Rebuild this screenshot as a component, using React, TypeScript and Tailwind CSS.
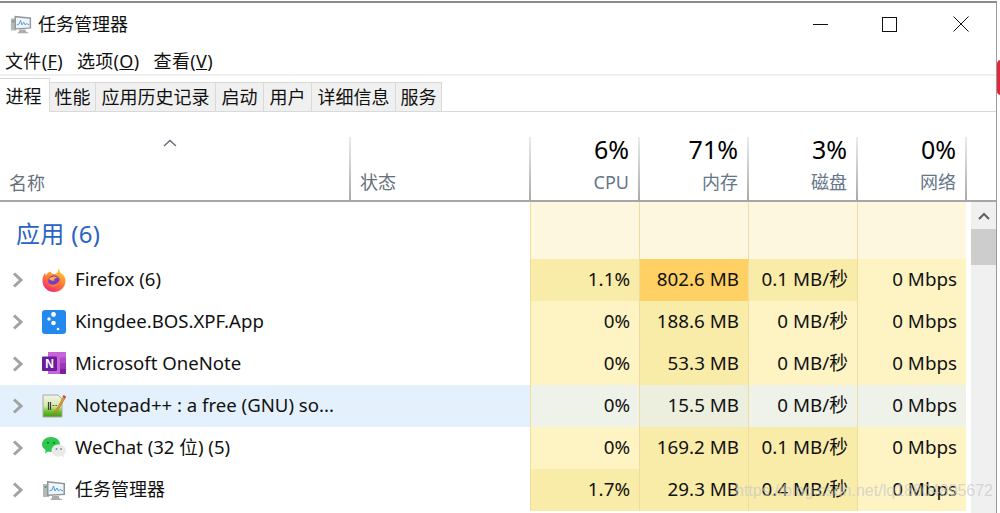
const FONT = "font-['Noto_Sans','Noto_Sans_CJK_SC',sans-serif]";

const TaskIcon = ({ className }: { className: string }) => (
    <svg viewBox="0 0 24 24" className={className}>
        <rect x="1" y="6" width="6" height="13" fill="#b5b8b8" />
        <rect x="2.5" y="8" width="2" height="2" fill="#5aa85a" />
        <path d="M5 3 L23 5 L23 17 L5 18 Z" fill="#8f9599" />
        <path d="M6.5 4.8 L21.5 6.3 L21.5 15.8 L6.5 16.5 Z" fill="#eef5fa" />
        <path d="M7.5 13 L10 12 L11.5 8 L13 13 L15 10 L16.5 13 L18 11.5 L21 13" fill="none" stroke="#4f9bd0" strokeWidth="1" />
        <path d="M10 18 L17 18 L17 20 L21 22 L8 22 L10 20 Z" fill="#a9adb0" />
    </svg>
);

const FirefoxIcon = () => (
    <svg viewBox="0 0 24 24" className="w-6 h-6">
        <defs>
            <linearGradient id="ffBody" x1="0.8" y1="0" x2="0.3" y2="1">
                <stop offset="0" stopColor="#ffd23c" />
                <stop offset="0.45" stopColor="#ff8a2a" />
                <stop offset="1" stopColor="#f5247a" />
            </linearGradient>
        </defs>
        <path d="M16 0.5 C18 3 17.5 4 19 5 C22 7 23.5 10 23.5 13 A11.5 11 0 0 1 0.5 13 C0.5 10 1 7 3 5 L4 7.5 C5 5 7 4 9 3.5 C8.5 5 10 6 12 6 C15 6 16.5 4 16 0.5 Z" fill="url(#ffBody)" />
        <circle cx="12" cy="13" r="5.8" fill="#7a3bc8" />
        <path d="M7 11 C9 8 13 7.5 16 10 C13 9.5 11.5 11 12.5 12.5 C10 13 8.5 12.5 7 11 Z" fill="#ffb03a" />
        <path d="M18 9 C19.5 13 17.5 18.5 12 19 C9 19.2 6.5 17.5 5.5 15 C8 17 12.5 17.5 15.5 15 C17.5 13.2 18.2 11 18 9 Z" fill="#ff7a2a" />
    </svg>
);

const KingdeeIcon = () => (
    <svg viewBox="0 0 24 24" className="w-6 h-6">
        <rect width="24" height="24" rx="3" fill="#2389ee" />
        <circle cx="11.5" cy="4.5" r="2.4" fill="#fff" />
        <circle cx="7" cy="9" r="1.7" fill="#fff" />
        <circle cx="11.5" cy="13" r="2.3" fill="#fff" />
        <circle cx="16" cy="19" r="1.3" fill="#fff" />
    </svg>
);

const OneNoteIcon = () => (
    <svg viewBox="0 0 24 24" className="w-6 h-6">
        <rect x="6" y="0" width="18" height="22" fill="#c765d8" />
        <rect x="18" y="5.5" width="6" height="5.5" fill="#b14cc8" />
        <rect x="18" y="11" width="6" height="5.5" fill="#9c35b8" />
        <rect x="18" y="16.5" width="6" height="5.5" fill="#7d1fa0" />
        <rect x="0" y="4.5" width="15" height="14.5" rx="1" fill="#6a1d9a" />
        <text x="7.5" y="16" textAnchor="middle" fill="#fff" fontSize="12" fontWeight="700" fontFamily="Liberation Sans">N</text>
    </svg>
);

const NotepadIcon = () => (
    <svg viewBox="0 0 24 24" className="w-6 h-6">
        <defs>
            <linearGradient id="npPage" x1="0" y1="0" x2="0" y2="1">
                <stop offset="0" stopColor="#f4f4ec" />
                <stop offset="0.5" stopColor="#d6e8a8" />
                <stop offset="0.75" stopColor="#6cc22c" />
                <stop offset="1" stopColor="#3f9a1e" />
            </linearGradient>
        </defs>
        <path d="M1 1 L16 1 L20 5 L20 23 L1 23 Z" fill="url(#npPage)" stroke="#a8aca4" strokeWidth="1" />
        <path d="M6.5 8 L6.5 16 M8.5 8 L8.5 16" stroke="#3b3b3b" strokeWidth="1.2" />
        <path d="M10.5 11.5 L15 11.5" stroke="#555" strokeWidth="1" strokeDasharray="2 1" />
        <path d="M22 2 L13.5 17 L11.5 20.5 L14.5 18.5 L23.5 3.5 Z" fill="#e8a020" stroke="#9a5a18" strokeWidth="0.5" />
        <path d="M21.5 1 L24 2.5 L23 4.5 L20.5 3 Z" fill="#d8443a" />
    </svg>
);

const WeChatIcon = () => (
    <svg viewBox="0 0 24 24" className="w-6 h-6">
        <path d="M9 1 C14 1 18 4 18 8.5 C18 13 14 16 9 16 C8 16 7 16 6 15.6 L3 17.5 L3.6 14 C1.3 12.6 0 10.6 0 8.5 C0 4 4 1 9 1 Z" fill="#2dc84d" />
        <circle cx="6" cy="6.8" r="1.1" fill="#137a2a" />
        <circle cx="12" cy="6.8" r="1.1" fill="#137a2a" />
        <path d="M16.5 8.5 C20.6 8.5 24 11.2 24 14.5 C24 16.2 23 17.7 21.7 18.7 L22.2 21.5 L19.6 20 C18.6 20.3 17.6 20.5 16.5 20.5 C12.4 20.5 9.5 17.8 9.5 14.5 C9.5 11.2 12.4 8.5 16.5 8.5 Z" fill="#e9e9e9" />
        <circle cx="14.5" cy="13" r="0.9" fill="#8a8a8a" />
        <circle cx="19" cy="13" r="0.9" fill="#8a8a8a" />
    </svg>
);

type Heat = 'low' | 'mid' | 'high' | 'soft' | 'softer';

const heatClass: Record<Heat, string> = {
    low: 'bg-[#fdf3c3]',
    mid: 'bg-[#f9eba8]',
    high: 'bg-[#ffd064]',
    soft: 'bg-[#eff2e9]',
    softer: 'bg-[#ecefdd]',
};

interface Row {
    name: string;
    icon: React.ReactNode;
    cells: [string, Heat][];
    selected?: boolean;
    nameClass?: string;
}

const rows: Row[] = [
    { name: 'Firefox (6)', icon: <FirefoxIcon />, cells: [['1.1%', 'mid'], ['802.6 MB', 'high'], ['0.1 MB/秒', 'mid'], ['0 Mbps', 'low']] },
    { name: 'Kingdee.BOS.XPF.App', icon: <KingdeeIcon />, cells: [['0%', 'low'], ['188.6 MB', 'mid'], ['0 MB/秒', 'low'], ['0 Mbps', 'low']] },
    { name: 'Microsoft OneNote', icon: <OneNoteIcon />, cells: [['0%', 'low'], ['53.3 MB', 'mid'], ['0 MB/秒', 'low'], ['0 Mbps', 'low']] },
    { name: 'Notepad++ : a free (GNU) so...', icon: <NotepadIcon />, selected: true, cells: [['0%', 'soft'], ['15.5 MB', 'softer'], ['0 MB/秒', 'soft'], ['0 Mbps', 'soft']] },
    { name: 'WeChat (32 位) (5)', icon: <WeChatIcon />, cells: [['0%', 'low'], ['169.2 MB', 'mid'], ['0.1 MB/秒', 'mid'], ['0 Mbps', 'low']] },
    { name: '任务管理器', icon: <TaskIcon className="w-6 h-6" />, nameClass: 'text-[18px]', cells: [['1.7%', 'mid'], ['29.3 MB', 'mid'], ['0.4 MB/秒', 'mid'], ['0 Mbps', 'low']] },
];

const tabs = [
    { label: '性能', width: 'w-[46px]' },
    { label: '应用历史记录', width: 'w-[120px]' },
    { label: '启动', width: 'w-[48px]' },
    { label: '用户', width: 'w-[48px]' },
    { label: '详细信息', width: 'w-[84px]' },
    { label: '服务', width: 'w-[46px]' },
];

const columns = [
    { pct: '6%', label: 'CPU' },
    { pct: '71%', label: '内存' },
    { pct: '3%', label: '磁盘' },
    { pct: '0%', label: '网络' },
];

const HeaderDivider = () => <div className="w-[2px] self-stretch bg-gradient-to-b from-[#ececec] to-[#ababab]" />;

export default function App() {
    return (
        <div className={`${FONT} relative w-[1000px] h-[513px] overflow-hidden bg-white text-[18px] leading-none text-[#111]`}>
            <div className="w-[997px] h-[513px] flex flex-col border-t-[2px] border-t-[#8a8a8a] border-r-[1px] border-r-[#9a9a9a] mt-px">
                {/* Title bar */}
                <div className="h-[42px] flex items-center shrink-0">
                    <TaskIcon className="w-[22px] h-[22px] ml-[10px]" />
                    <span className="ml-[6px] text-[18px]">任务管理器</span>
                    <div className="ml-auto flex items-center pr-[27px]">
                        <div className="w-[15px] h-px bg-[#111]" />
                        <div className="ml-[54px] w-[15px] h-[15px] border border-[#111]" />
                        <svg viewBox="0 0 16 16" className="ml-[56px] w-[16px] h-[16px]"><path d="M0.5 0.5 L15.5 15.5 M15.5 0.5 L0.5 15.5" stroke="#111" strokeWidth="1" /></svg>
                    </div>
                </div>
                {/* Menu */}
                <div className="h-[31px] flex items-center pl-[5px] gap-[14px] pt-[2px] shrink-0 border-b-2 border-[#f0f0f0] tracking-[0.35px]">
                    <span>文件(<u>F</u>)</span>
                    <span>选项(<u>O</u>)</span>
                    <span>查看(<u>V</u>)</span>
                </div>
                {/* Tabs */}
                <div className="h-[36px] flex items-end shrink-0 border-b border-[#d9d9d9]">
                    <div className="h-[34px] w-[50px] flex items-center justify-center pr-[2px] border-r border-t border-[#d9d9d9] bg-white -mb-px">进程</div>
                    {tabs.map((tab) => (
                        <div key={tab.label} className={`h-[29px] ${tab.width} flex items-center justify-center border-r border-t border-[#d9d9d9] bg-[#f0f0f0] whitespace-nowrap`}>{tab.label}</div>
                    ))}
                </div>
                {/* Column headers */}
                <div className="h-[25px] shrink-0" />
                <div className="h-[65px] flex shrink-0 border-b-[2px] border-[#a6a6a6]">
                    <div className="w-[349px] relative flex items-end pl-[9px] pb-[8px] text-[#66707a]">
                        <span>名称</span>
                        <svg viewBox="0 0 14 8" className="absolute left-[163px] top-[2px] w-[14px] h-[8px]"><path d="M1 7 L7 1.5 L13 7" fill="none" stroke="#5f6a7a" strokeWidth="1.3" /></svg>
                    </div>
                    <HeaderDivider />
                    <div className="w-[178px] flex items-end pl-[9px] pb-[9px] text-[#66707a]">状态</div>
                    {columns.map((col) => (
                        <div key={col.label} className="flex">
                            <HeaderDivider />
                            <div className="w-[107px] flex flex-col items-end pr-[9px]">
                                <span className="text-[25px] leading-[24px] text-black">{col.pct}</span>
                                <span className="mt-[12px] text-[#66768a]">{col.label}</span>
                            </div>
                        </div>
                    ))}
                    <HeaderDivider />
                </div>
                {/* Table body */}
                <div className="flex flex-1 min-h-0">
                    <div className="w-[966px] flex flex-col">
                        <div className="h-[57px] flex shrink-0">
                            <div className="w-[530px] pl-[16px] pt-[20px] text-[24px] leading-none tracking-[0.3px] text-[#2a62c8]">应用 (6)</div>
                            {columns.map((col) => (
                                <div key={col.label} className="w-[109px] bg-[#fef7e0] border-l border-[#f0dca0]" />
                            ))}
                        </div>
                        {rows.map((row) => (
                            <div key={row.name} className="h-[42px] flex shrink-0">
                                <div className={`w-[530px] flex items-center ${row.selected ? 'bg-[#e4f1fc]' : ''}`}>
                                    <svg viewBox="0 0 12 16" className="w-[12px] h-[16px] ml-[12px] shrink-0"><path d="M2 1.5 L9 8 L2 14.5" fill="none" stroke="#a2a2a2" strokeWidth="3" /></svg>
                                    <div className="ml-[18px] w-6 h-6 shrink-0">{row.icon}</div>
                                    <span className={`ml-[9px] pb-[2px] whitespace-nowrap ${row.nameClass ?? 'text-[18.6px]'}`}>{row.name}</span>
                                </div>
                                {row.cells.map(([value, heat], i) => (
                                    <div key={i} className={`w-[109px] flex items-center justify-end pr-[9px] pb-[2px] border-l border-[#efdba4] text-[18.8px] whitespace-nowrap ${heatClass[heat]}`}>{value}</div>
                                ))}
                            </div>
                        ))}
                    </div>
                    {/* Scrollbar */}
                    <div className="w-[30px] flex justify-end">
                        <div className="w-[25px] bg-[#f0f0f0] flex flex-col">
                            <div className="h-[27px] flex items-center justify-center">
                                <svg viewBox="0 0 12 8" className="w-[12px] h-[8px]"><path d="M1 7 L6 2 L11 7" fill="none" stroke="#606060" strokeWidth="2" /></svg>
                            </div>
                            <div className="h-[36px] bg-[#cdcdcd]" />
                        </div>
                    </div>
                </div>
            </div>
            <div className="absolute left-[997px] top-[60px] w-[8px] h-[35px] rounded-full bg-[#e0283c]" />
            <div className="absolute left-[735px] top-[483px] text-[16px] whitespace-nowrap text-[#c8c8c8]/70 font-['Liberation_Sans',sans-serif]">https://blog.csdn.net/lq18804895672</div>
        </div>
    );
}
